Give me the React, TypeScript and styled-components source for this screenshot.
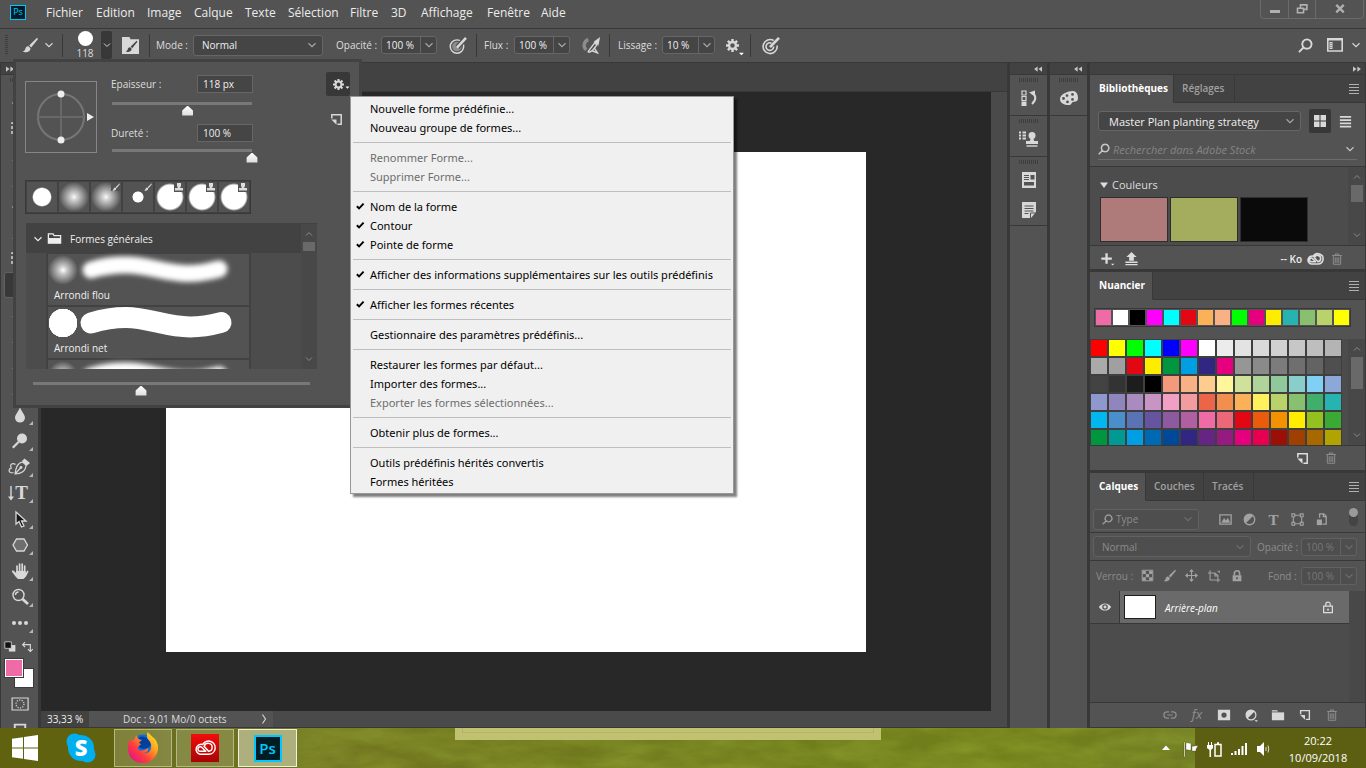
import React from "react";
import styled, { createGlobalStyle, css } from "styled-components";

const c = {
  panel: "#535353",
  strip: "#424242",
  line: "#383838",
  well: "#4c4c4c",
  field: "#454545",
  edge: "#666666",
  text: "#dddddd",
  icon: "#d8d8d8",
  dim: "#8c8c8c",
  canvas: "#282828",
};

const GlobalStyle = createGlobalStyle`
  *, *::before, *::after { box-sizing: border-box; }
  html, body, #root { height: 100%; }
  body {
    margin: 0;
    overflow: hidden;
    font-family: "Open Sans", "Noto Sans", sans-serif;
    font-size: 10px;
    color: ${c.text};
    background: ${c.panel};
  }
  button, input, select { font: inherit; color: inherit; margin: 0; }
  button { border: 0; padding: 0; background: none; }
  svg { display: block; flex: none; overflow: visible; }
`;

/* ---------- Window frame ---------- */

const Window = styled.div`
  height: 100vh;
  display: flex;
  flex-direction: column;
  position: relative;
`;

const MenuBar = styled.header`
  height: 29px;
  flex: none;
  display: flex;
  align-items: center;
  padding: 0 2px 3px 10px;
  background: ${c.panel};
  border-bottom: 1px solid ${c.line};
`;

const AppBadge = styled.span`
  width: 16px;
  height: 15px;
  margin-right: 20px;
  border: 1px solid #00c8ff;
  background: #001d26;
  color: #00c8ff;
  font-size: 9px;
  line-height: 12px;
  text-align: center;
`;

const MenuNav = styled.nav`
  display: flex;
  gap: 14px;
  flex: 1;
`;

const MenuLink = styled.button<{ $w: number }>`
  width: ${(p) => p.$w}px;
  font-size: 12px;
  line-height: 16px;
  color: #ececec;
  text-align: left;
  white-space: nowrap;
`;

const WindowButtons = styled.div`
  display: flex;
  align-self: flex-start;
  height: 19px;
  border: 1px solid #6a6a6a;
  border-top: 0;
  border-radius: 0 0 4px 4px;
`;

const WindowButton = styled.button<{ $w: number }>`
  width: ${(p) => p.$w}px;
  display: flex;
  justify-content: center;
  align-items: center;
  color: #b0b0b0;
  & + & { border-left: 1px solid #6a6a6a; }
`;

/* ---------- Options bar ---------- */

const OptionsBar = styled.div`
  height: 34px;
  flex: none;
  display: flex;
  align-items: center;
  padding: 0 2px 1px 5px;
  background: ${c.panel};
  border-bottom: 1px solid ${c.line};
`;

const Grip = styled.span<{ $vertical?: boolean }>`
  display: block;
  flex: none;
  width: ${(p) => (p.$vertical ? 3 : 20)}px;
  height: ${(p) => (p.$vertical ? 20 : 4)}px;
  background: repeating-linear-gradient(
    ${(p) => (p.$vertical ? "180deg" : "90deg")},
    #3e3e3e 0 1px,
    transparent 1px 2px
  );
`;

const Divider = styled.span<{ $l?: number; $r?: number }>`
  width: 1px;
  height: 23px;
  flex: none;
  background: ${c.line};
  margin: 0 ${(p) => p.$r ?? 7}px 0 ${(p) => p.$l ?? 10}px;
`;

const IconButton = styled.button<{ $w: number; $h?: number; $dark?: boolean }>`
  width: ${(p) => p.$w}px;
  height: ${(p) => p.$h ?? 24}px;
  flex: none;
  display: flex;
  align-items: center;
  justify-content: center;
  border-radius: 2px;
  color: ${c.icon};
  background: ${(p) => (p.$dark ? "#383838" : "none")};
`;

const BrushTip = styled.div`
  width: 32px;
  display: flex;
  flex-direction: column;
  align-items: center;
  font-size: 10px;
  line-height: 12px;
  &::before {
    content: "";
    width: 15px;
    height: 15px;
    margin-bottom: 1px;
    border-radius: 50%;
    background: #fff;
  }
`;

const Label = styled.label<{ $w?: number; $dim?: boolean }>`
  flex: none;
  width: ${(p) => (p.$w ? `${p.$w}px` : "auto")};
  font-size: 10px;
  line-height: 14px;
  white-space: nowrap;
  color: ${(p) => (p.$dim ? c.dim : c.text)};
`;

const SelectBox = styled.div<{ $w?: number; $h?: number; $dim?: boolean }>`
  display: grid;
  align-items: center;
  flex: ${(p) => (p.$w ? "none" : 1)};
  width: ${(p) => (p.$w ? `${p.$w}px` : "auto")};
  height: ${(p) => p.$h ?? 21}px;
  border: 1px solid ${(p) => (p.$dim ? "#616161" : c.edge)};
  border-radius: 3px;
  background: ${(p) => (p.$dim ? "#4e4e4e" : c.field)};
  color: ${(p) => (p.$dim ? c.dim : "#f0f0f0")};
  & > * { grid-area: 1 / 1; }
  & > svg { justify-self: end; margin-right: 3px; pointer-events: none; color: ${(p) => (p.$dim ? "#6c6c6c" : "#a8a8a8")}; }
`;

const Select = styled.select<{ $size?: number; $pad?: number }>`
  appearance: none;
  width: 100%;
  height: 100%;
  border: 0;
  background: none;
  opacity: 1;
  font-size: ${(p) => p.$size ?? 10}px;
  padding: 0 16px 0 ${(p) => p.$pad ?? 8}px;
`;

const ValueField = styled.div<{ $w: number; $dim?: boolean }>`
  flex: none;
  width: ${(p) => p.$w}px;
  height: 18px;
  display: flex;
  align-items: center;
  border: 1px solid ${(p) => (p.$dim ? "#616161" : c.edge)};
  border-radius: 3px;
  background: ${(p) => (p.$dim ? "#4e4e4e" : c.field)};
  color: ${(p) => (p.$dim ? "#777" : "#f0f0f0")};
  input {
    flex: 1;
    min-width: 0;
    height: 100%;
    border: 0;
    padding: 0 0 0 4px;
    background: none;
    font-size: 10px;
  }
  button {
    width: 16px;
    height: 100%;
    display: flex;
    align-items: center;
    justify-content: center;
    border-left: 1px solid ${(p) => (p.$dim ? "#616161" : c.edge)};
    color: ${(p) => (p.$dim ? "#6c6c6c" : "#a8a8a8")};
  }
`;

const Spacer = styled.span<{ $w?: number }>`
  flex: ${(p) => (p.$w ? "none" : 1)};
  width: ${(p) => p.$w ?? 0}px;
`;

/* ---------- Workspace ---------- */

const Workspace = styled.main`
  flex: 1;
  min-height: 0;
  display: flex;
  background: ${c.line};
  border-right: 1px solid ${c.line};
  gap: 3px;
`;

const ToolColumn = styled.aside`
  width: 37px;
  margin-left: 1px;
  flex: none;
  overflow: hidden;
  background: ${c.panel};
  display: flex;
  flex-direction: column;
  align-items: center;
  & > * { flex: none; }
`;

const CollapseBar = styled.div<{ $left?: boolean }>`
  align-self: stretch;
  flex: none;
  height: 12px;
  display: flex;
  align-items: center;
  justify-content: ${(p) => (p.$left ? "flex-start" : "flex-end")};
  padding: 0 5px;
  background: ${c.strip};
  border-bottom: 1px solid ${c.line};
  color: #c8c8c8;
`;

const ToolButton = styled.button<{ $active?: boolean }>`
  position: relative;
  width: 32px;
  height: 26px;
  flex: none;
  display: flex;
  align-items: center;
  justify-content: center;
  border-radius: 3px;
  color: ${c.icon};
  ${(p) => p.$active && css`background: #383838; border: 1px solid #626262;`}
  &::after {
    content: "";
    position: absolute;
    right: 3px;
    bottom: 3px;
    border: 2px solid transparent;
    border-right-color: #b8b8b8;
    border-bottom-color: #b8b8b8;
  }
`;

const ToolList = styled.div`
  padding: 5px 0 3px;
  display: flex;
  flex-direction: column;
`;

const ToolGrip = styled.div`
  padding-top: 3px;
  height: 10px;
`;

const SwatchPair = styled.div`
  display: grid;
  grid-template-columns: 10px 8px 10px;
  grid-template-rows: 10px 8px 10px;
  margin: 4px 2px 8px 0;
`;

const ColorChip = styled.button<{ $front?: boolean; $color: string }>`
  grid-area: ${(p) => (p.$front ? "1 / 1 / 3 / 3" : "2 / 2 / 4 / 4")};
  z-index: ${(p) => (p.$front ? 1 : 0)};
  background: ${(p) => p.$color};
  border: 1px solid #fff;
  outline: 1px solid #3a3a3a;
`;

const DocumentArea = styled.section`
  flex: 1;
  min-width: 0;
  display: flex;
  flex-direction: column;
  background: ${c.strip};
`;

const DocTabs = styled.div`
  height: 29px;
  flex: none;
  border-bottom: 1px solid ${c.line};
`;

const CanvasRow = styled.div`
  flex: 1;
  min-height: 0;
  display: flex;
`;

const CanvasView = styled.div`
  flex: 1;
  display: flex;
  align-items: center;
  justify-content: center;
  background: ${c.canvas};
`;

const Artboard = styled.div`
  width: 700px;
  height: 500px;
  background: #fff;
`;

const CanvasScroll = styled.div`
  width: 16px;
  background: #4a4a4a;
`;

const StatusBar = styled.footer`
  flex: none;
  height: 17px;
  display: flex;
  background: #4a4a4a;
  border-bottom: 1px solid ${c.line};
  line-height: 16px;
`;

const Zoom = styled.input`
  width: 48px;
  border: 0;
  padding: 0 0 0 6px;
  background: #424242;
  color: #f0f0f0;
`;

const DocInfo = styled.div`
  width: 184px;
  display: flex;
  align-items: center;
  justify-content: space-between;
  padding: 0 3px 0 34px;
  background: ${c.panel};
`;

/* ---------- Docks ---------- */

const IconDock = styled.aside`
  flex: none;
  width: 37px;
  display: flex;
  flex-direction: column;
  background: ${c.panel};
`;

const DockGroup = styled.div`
  display: flex;
  flex-direction: column;
  align-items: center;
  padding: 3px 0 1px;
  border-bottom: 1px solid ${c.line};
`;

const PanelColumn = styled.aside`
  flex: none;
  width: 275px;
  display: flex;
  flex-direction: column;
`;

const Panel = styled.section<{ $grow?: boolean }>`
  display: flex;
  flex-direction: column;
  background: ${c.panel};
  min-height: 0;
  flex: ${(p) => (p.$grow ? 1 : "none")};
  margin-bottom: ${(p) => (p.$grow ? 1 : 3)}px;
`;

const TabStrip = styled.div`
  flex: none;
  height: 28px;
  display: flex;
  align-items: stretch;
  background: ${c.strip};
`;

const Tab = styled.button<{ $on?: boolean; $w: number }>`
  width: ${(p) => p.$w}px;
  text-align: left;
  padding: 0 0 1px ${(p) => (p.$on ? 9 : 8)}px;
  font-size: 10px;
  font-weight: ${(p) => (p.$on ? 700 : 600)};
  white-space: nowrap;
  color: ${(p) => (p.$on ? "#fff" : "#a0a0a0")};
  background: ${(p) => (p.$on ? c.panel : c.strip)};
  border-right: 1px solid ${c.line};
  border-bottom: 1px solid ${(p) => (p.$on ? c.panel : c.line)};
`;

const TabFill = styled.div`
  flex: 1;
  display: flex;
  align-items: center;
  justify-content: flex-end;
  padding: 0 3px 2px 0;
  border-bottom: 1px solid ${c.line};
  color: #b0b0b0;
`;

const Row = styled.div<{ $h: number; $pad?: string; $line?: boolean }>`
  flex: none;
  height: ${(p) => p.$h}px;
  display: flex;
  align-items: center;
  padding: ${(p) => p.$pad ?? "0"};
  border-bottom: ${(p) => (p.$line ? `1px solid ${c.line}` : "0")};
`;

const SearchRow = styled.div`
  flex: none;
  height: 21px;
  margin: 0 8px 6px;
  display: flex;
  align-items: center;
  gap: 3px;
  border-bottom: 1px solid #6c6c6c;
  color: #c8c8c8;
  input {
    flex: 1;
    min-width: 0;
    border: 0;
    padding: 0;
    background: none;
    font-size: 11px;
    font-style: italic;
  }
  input::placeholder { color: #848484; opacity: 1; }
`;

const LibraryBody = styled.div`
  flex: none;
  height: 80px;
  display: flex;
  overflow: hidden;
  background: ${c.well};
  border-top: 1px solid ${c.line};
  border-bottom: 1px solid ${c.line};
`;

const LibraryMain = styled.div`
  flex: 1;
  padding: 9px 0 0 10px;
`;

const GroupTitle = styled.h3`
  margin: 0 0 3px;
  display: flex;
  align-items: center;
  gap: 4px;
  font-size: 11px;
  font-weight: 400;
  line-height: 18px;
`;

const BigSwatches = styled.div`
  display: flex;
  gap: 2px;
`;

const BigSwatch = styled.button<{ $color: string }>`
  width: 68px;
  height: 45px;
  border: 1px solid #2e2e2e;
  background: ${(p) => p.$color};
`;

const ScrollTrack = styled.div<{ $w: number; $thumb: number; $top?: number }>`
  flex: none;
  width: ${(p) => p.$w}px;
  display: flex;
  flex-direction: column;
  align-items: center;
  padding: ${(p) => p.$top ?? 8}px 1px 4px;
  background: #484848;
  color: #8a8a8a;
  &::after {
    content: "";
    order: 1;
    width: 12px;
    height: ${(p) => p.$thumb}px;
    background: #696969;
    margin: 2px 0 auto;
  }
  svg:last-of-type { order: 2; }
`;

const RecentColors = styled.div`
  display: grid;
  grid-template-columns: repeat(15, 15px);
  grid-auto-rows: 15px;
  gap: 2px;
  padding: 1px;
  border: 1px solid ${c.line};
`;

const Chip = styled.button<{ $color: string }>`
  background: ${(p) => p.$color};
`;

const SwatchArea = styled.div`
  flex: none;
  height: 107px;
  display: flex;
  justify-content: space-between;
  overflow: hidden;
  background: ${c.well};
  border-bottom: 1px solid ${c.line};
`;

const SwatchGrid = styled.div`
  display: grid;
  grid-template-columns: repeat(14, 16px);
  grid-auto-rows: 16px;
  gap: 2px;
  padding: 1px;
  height: 110px;
  background: #3f3f3f;
`;

const Layers = styled.div`
  flex: 1;
  min-height: 0;
  display: flex;
  background: #484848;
  border-bottom: 1px solid ${c.line};
`;

const LayerStack = styled.div`
  flex: 1;
  background: ${c.well};
  margin-right: 16px;
`;

const LayerRow = styled.div`
  height: 33px;
  display: flex;
  border-bottom: 1px solid ${c.line};
  background: #6a6a6a;
`;

const LayerEye = styled.button`
  width: 30px;
  display: flex;
  align-items: center;
  justify-content: center;
  color: ${c.icon};
  background: ${c.panel};
  border-right: 1px solid ${c.line};
`;

const LayerThumb = styled.span`
  width: 32px;
  height: 24px;
  margin: 4px 9px 4px 4px;
  border: 1px solid #1e1e1e;
  background: #fff;
`;

const LayerName = styled.button`
  flex: 1;
  text-align: left;
  padding-top: 2px;
  font-size: 10px;
  font-style: italic;
  color: #fff;
`;

const Dim = styled.span`
  color: #8f8f8f;
`;

const FooterIcons = styled.div`
  display: flex;
  gap: 13px;
  color: ${c.icon};
`;

const FooterText = styled.span`
  font-weight: 600;
  color: #eee;
`;

const Pill = styled.button`
  width: 9px;
  height: 18px;
  border-radius: 5px;
  background: #444;
  display: flex;
  margin-left: 20px;
  margin-bottom: 4px;
  &::before {
    content: "";
    width: 9px;
    height: 9px;
    border-radius: 50%;
    background: #9a9a9a;
  }
`;

const Muted = styled.div`
  display: flex;
  align-items: center;
  gap: 9px;
  color: #a2a2a2;
`;

const FilterSelect = styled(SelectBox)`
  grid-template-columns: 22px 1fr;
  & > svg:first-child { grid-area: 1 / 1; justify-self: start; margin-left: 8px; color: #9a9a9a; }
  & > select { grid-area: 1 / 1 / 2 / 3; }
  & > svg:last-child { grid-area: 1 / 2; }
`;

/* ---------- Brush picker ---------- */

const BrushPopup = styled.section`
  position: absolute;
  left: 13px;
  top: 59px;
  width: 349px;
  height: 349px;
  border: 3px solid ${c.strip};
  background: ${c.panel};
  padding: 10px 9px 0;
  display: flex;
  flex-direction: column;
`;

const PopupTop = styled.div`
  display: flex;
  height: 108px;
`;

const AngleBox = styled.div`
  width: 72px;
  height: 72px;
  margin: 9px 14px 0 0;
  border: 1px solid #868686;
  flex: none;
`;

const ParamColumn = styled.div`
  width: 142px;
  padding-top: 3px;
`;

const Param = styled.div<{ $gap: number }>`
  margin-bottom: ${(p) => 15 - p.$gap}px;
`;

const ParamHead = styled.div<{ $gap: number }>`
  display: flex;
  justify-content: space-between;
  align-items: center;
  height: 18px;
  margin-bottom: ${(p) => p.$gap}px;
  input {
    width: 56px;
    height: 18px;
    border: 1px solid ${c.edge};
    background: ${c.field};
    padding: 0 5px;
    color: #f0f0f0;
    font-size: 10px;
  }
`;

const Slider = styled.input`
  appearance: none;
  display: block;
  width: calc(100% + 10px);
  height: 16px;
  margin: 0 -5px;
  background: none;
  &::-webkit-slider-runnable-track {
    height: 3px;
    background: linear-gradient(#787878, #787878) center / calc(100% - 12px) 3px no-repeat;
  }
  &::-webkit-slider-thumb {
    appearance: none;
    width: 12px;
    height: 10px;
    margin-top: 4px;
    background: linear-gradient(#fff, #dcdcdc);
    clip-path: polygon(50% 0, 95% 50%, 95% 100%, 5% 100%, 5% 50%);
  }
`;

const PopupSide = styled.div`
  margin-left: auto;
  display: flex;
  flex-direction: column;
  align-items: flex-start;
  gap: 13px;
`;

const RecentBrushes = styled.div`
  display: flex;
  gap: 2px;
  width: 226px;
  padding: 1px;
  border: 1px solid ${c.line};
  background: ${c.strip};
`;

const RecentBrush = styled.button`
  flex: 1;
  height: 30px;
  background: ${c.panel};
`;

const BrushList = styled.div`
  width: 291px;
  height: 146px;
  margin: 9px 0 0 1px;
  display: flex;
  overflow: hidden;
  background: ${c.well};
  border-top: 1px solid ${c.strip};
`;

const BrushListMain = styled.div`
  flex: 1;
`;

const BrushGroup = styled.button`
  width: 100%;
  height: 29px;
  display: flex;
  align-items: center;
  gap: 2px;
  padding-left: 5px;
  background: ${c.strip};
  color: #eee;
  span { margin-left: 6px; }
`;

const BrushCard = styled.button`
  display: flex;
  flex-direction: column;
  align-items: flex-start;
  width: 203px;
  height: 51px;
  margin: 1px 0 2px 21px;
  background: ${c.panel};
  border-left: 1px solid ${c.strip};
  border-right: 1px solid ${c.strip};
  box-shadow: 0 0 0 1px ${c.strip};
  color: #f0f0f0;
  span { padding-left: 6px; line-height: 14px; }
`;

const SizeSlider = styled.div`
  width: 279px;
  margin: 6px 0 0 7px;
`;

/* ---------- Context menu ---------- */

const ContextMenu = styled.div`
  position: absolute;
  left: 350px;
  top: 96px;
  width: 384px;
  padding: 2px;
  background: #f0f0f0;
  border: 1px solid #979797;
  box-shadow: 3px 3px 2px rgba(0, 0, 0, 0.5);
`;

const MenuItem = styled.button`
  width: 100%;
  height: 19px;
  display: grid;
  grid-template-columns: 17px 1fr;
  align-items: center;
  text-align: left;
  font-family: "Noto Sans", "Open Sans", sans-serif;
  font-size: 11px;
  line-height: 18px;
  color: #000;
  white-space: nowrap;
  &:disabled { color: #6d6d6d; }
  span { grid-column: 2; }
  svg { grid-row: 1; margin-left: 3px; }
`;

const Separator = styled.hr`
  height: 1px;
  margin: 5px 0;
  border: 0;
  background: #bebebe;
`;

/* ---------- Taskbar ---------- */

const Taskbar = styled.footer`
  flex: none;
  height: 40px;
  display: flex;
  position: relative;
  overflow: hidden;
  background: linear-gradient(90deg, #60620f 0, #60620f 114px, #6c7022 180px, #70751f 360px, #6f7b1c 55%, #71801a 75%, #6f7a22 1195px);
`;

const Grass = styled.svg`
  position: absolute;
  left: 297px;
  top: 0;
  opacity: 0.35;
`;

const TaskItem = styled.button<{ $w: number; $state?: "open" | "active" }>`
  position: relative;
  flex: none;
  width: ${(p) => p.$w}px;
  height: 38px;
  margin: 1px 4px 0 0;
  display: flex;
  align-items: center;
  justify-content: center;
  ${(p) => p.$state === "open" && css`background: rgba(170, 175, 120, 0.4); border: 1px solid #b5b784;`}
  ${(p) => p.$state === "active" && css`background: rgba(200, 203, 165, 0.7); border: 1px solid #f0f0e0;`}
`;

const PsTile = styled.span`
  width: 28px;
  height: 27px;
  border: 2px solid #00c8ff;
  background: #001d26;
  color: #00c8ff;
  font-size: 15px;
  line-height: 22px;
  font-weight: 600;
`;

const Peek = styled.div`
  position: relative;
  flex: none;
  width: 426px;
  height: 12px;
  margin-left: 154px;
  background: #c0c272;
  padding: 0 7px;
  &::before {
    content: "";
    display: block;
    height: 5px;
    border: 1px solid #b2b468;
    border-top: 0;
  }
`;

const TrayArrow = styled.button`
  position: relative;
  margin-left: auto;
  padding-right: 8px;
  flex: none;
  color: #fff;
`;

const Tray = styled.div`
  position: relative;
  flex: none;
  width: 188px;
  display: flex;
  align-items: center;
  gap: 9px;
  padding: 2px 9px 0 5px;
  color: #fff;
  background: linear-gradient(90deg, transparent 17px, #5c5f12 17px);
`;

const Clock = styled.time`
  flex: 1;
  text-align: center;
  font-size: 11px;
  line-height: 17px;
`;

/* ---------- Icons ---------- */

type IconProps = { name: string; w?: number; h?: number };

const S = { fill: "none", stroke: "currentColor", strokeWidth: 1.4 } as const;
const F = { fill: "currentColor" } as const;

const BRUSH = <><path {...F} d="M15 0.8 L7.2 8.4 L9.2 10.6 L16 2 Z" /><path {...F} d="M6.5 9.2 C4.2 9 3.6 10.6 3.2 12.2 C2.8 13.4 2 14.2 0.6 14.8 C4 16 8.6 15 8.4 11.2 Z" /></>;

const GEAR = (
  <>
    <path {...F} fillRule="evenodd" d="M8 2.300a5.700 5.700 0 1 0 0 11.400a5.700 5.700 0 1 0 0-11.400zM8 5.200a2.800 2.800 0 1 1 0 5.600a2.800 2.800 0 1 1 0-5.600z" />
    <path d="M8 0v3.200M8 12.800V16M0 8h3.200M12.800 8H16M2.300 2.300l2.300 2.300M11.400 11.400l2.300 2.300M2.300 13.700l2.300-2.300M11.400 4.600l2.300-2.300" stroke="currentColor" strokeWidth="3" />
  </>
);

const CLOUD = "M4.800 13.200H11.200a4.900 4.900 0 1 0-4.300-7.300A3.800 3.800 0 1 0 4.800 13.200M9.500 11H5a1.700 1.700 0 1 1 1.300-2.800L9 11M8 7a3 3 0 1 1 3.200 4L7.500 6.800";

const ICONS: Record<string, React.ReactNode> = {
  down: <path {...S} strokeWidth={1.300} d="M4 6 L8 10 L12 6" />,
  up: <path {...S} strokeWidth={1.300} d="M4 10 L8 6 L12 10" />,
  brush: BRUSH,
  brushFolder: <><path {...F} d="M0 0h7l1 2h8v14H0z" /><g transform="translate(3 3) scale(.72)" color="#444">{BRUSH}</g></>,
  gear: GEAR,
  gearCorner: <>{GEAR}<path d="M16 17h6l-3 3z" fill="#fff" /></>,
  gearSide: <>{GEAR}<path d="M18 11h6l-3 3z" fill="#eee" /></>,
  pressure: <><circle cx="7.500" cy="9" r="6.300" {...S} /><circle cx="7.500" cy="9" r="4.500" fill="#8d8d8d" /><path d="M8 9.500 L16 0.800" stroke="#535353" strokeWidth="5" /><path d="M7.500 10 L16 0.800" stroke="currentColor" strokeWidth="2.400" /></>,
  target: <><path {...S} strokeWidth={1.500} d="M11 3.300A6.600 6.600 0 1 0 14.200 8M9 5.800A3.600 3.600 0 1 0 11 9" /><path d="M7.500 9.500L16 0.800" stroke="currentColor" strokeWidth="2.600" /></>,
  airbrush: <><path d="M6 2.500A5.500 5.500 0 0 0 4 12" fill="none" stroke="#8c8c8c" strokeWidth="3.200" /><path {...S} strokeWidth={1.300} d="M5.500 14L12 5.500l2 2-4.500 5.500M5.500 14c2 1 3-1 4-1l5 2-2.500-4" /><path {...F} d="M11 4.500L17 0l-1.500 8z" /></>,
  search: <path {...S} strokeWidth={2} d="M5.600 10.400L1 15M9.500 1.500a5 5 0 1 0 .01 0z" />,
  workspace: <><path {...S} strokeWidth={1.600} d="M.8 2h14.400v12H.8z" /><path {...F} d="M0 1h16v2.500H0zM2.500 5h3v7h-3z" /><path d="M3.500 6.500h1M3.500 8.500h1M3.500 10.500h1" stroke="#535353" /></>,
  hamburger: <path {...S} strokeWidth={1} d="M3 4.500h10M3 7.500h10M3 10.500h10M3 13.500h10" />,
  list: <path {...S} strokeWidth={2} d="M2 3h12M2 6.500h12M2 10h12M2 13.500h12" />,
  grid: <path {...F} d="M2 2h5.500v5.500H2zM8.500 2H14v5.500H8.500zM2 8.500h5.500V14H2zM8.500 8.500H14V14H8.500z" />,
  newPage: <><path {...S} strokeWidth={1.600} d="M3 7V3h10v10H9" /><path {...F} d="M2.500 8H8v5.500z" /></>,
  trash: <path {...S} strokeWidth={1.100} d="M2.500 4h11M6 3.800V2.300h4v1.500M3.800 4.500V14h8.400V4.500M6 6v6.500M8 6v6.500M10 6v6.500" />,
  plus: <><path {...S} strokeWidth={2.600} d="M7.500 1.500v12M1.500 7.500h12" /><path {...F} d="M12.500 13.500h4l-2 2z" /></>,
  upload: <><path {...F} d="M8 1L13.500 6.500h-3v4h-5v-4h-3z" /><path {...S} d="M1.500 12h13M1.500 14.500h13" /></>,
  cloud: <path {...S} strokeWidth={1.500} d={CLOUD} />,
  history: <><path {...S} strokeWidth={1.200} d="M1 1h4v4H1zM1 6.500h4v4H1z" /><path {...F} d="M.5 11.500h5V16h-5zM8 2.500l6-2v5.500z" /><path {...S} strokeWidth={2} d="M10.500 3c5 2 5 7 .5 11" /></>,
  stampList: <><path {...S} strokeWidth={1.800} strokeDasharray="2 1.500 10" d="M-2 1.500h7M-2 4.500h7M-2 7.500h7" /><circle cx="11" cy="4.500" r="3.500" {...F} /><path {...F} d="M9.800 7h2.400l1 3H17v3H5v-3h3.800z" /><path {...S} d="M5.500 15h11" /></>,
  tools: <><path {...F} d="M1 0h14v16H1z" /><path d="M3 3.500h5M3 5.500h5M3 7.500h5" stroke="#535353" /><path d="M9.500 3h4v4.500h-4zM3 10h10v3.500H3z" fill="#535353" /></>,
  note: <><path {...F} d="M1 0h14v10l-5 6H1z" /><path d="M3.500 4h9M3.500 6.500h9M3.500 9h9M3.500 11.500h4M9.500 16v-5H15" stroke="#535353" fill="none" /></>,
  palette: <path {...F} fillRule="evenodd" d="M12 1C7 1-1 4-1 9c0 4 4 6 9 6 3 0 2-2.500 4-3s5 0 5-4-2-7-5-7zM2.500 7a1.400 1.400 0 1 1 0 2.900a1.400 1.400 0 1 1 0-2.900zM6 4.200a1.400 1.400 0 1 1 0 2.800a1.400 1.400 0 1 1 0-2.800zM11.500 3a1.400 1.400 0 1 1 0 2.800a1.400 1.400 0 1 1 0-2.800zM6.500 10.500a1.400 1.400 0 1 1 0 2.800a1.400 1.400 0 1 1 0-2.800zM11.500 8a1.400 1.400 0 1 1 0 2.800a1.400 1.400 0 1 1 0-2.800z" />,
  picture: <><path {...S} d="M2 3h12v10H2z" /><path {...F} d="M3.500 11.500l3-5 2 2.500 2-3 2.500 5.500z" /></>,
  adjust: <><circle cx="8" cy="8" r="5.600" {...S} /><path {...F} d="M12 4L4 12A5.600 5.600 0 0 1 12 4z" /></>,
  type: <text x="8" y="13.500" textAnchor="middle" fontFamily="Liberation Serif" fontWeight="700" fontSize="16" fill="currentColor">T</text>,
  shape: <path {...S} strokeWidth={1.200} d="M3.500 5v6M12.500 5v6M5 3.500h6M5 12.500h6M2 2h3v3H2zM11 2h3v3h-3zM2 11h3v3H2zM11 11h3v3h-3z" />,
  smart: <><path {...S} d="M6 6V2h4.500L13 4.500V13H9" /><path {...S} d="M10 2v3h3" /><path {...F} d="M3 8h5.500v6H3z" /></>,
  checker: <><path {...S} strokeWidth={1.200} d="M1.500 1.500h13v13h-13z" /><path {...F} d="M2 2h4v4H2zM10 2h4v4h-4zM6 6h4v4H6zM2 10h4v4H2zM10 10h4v4h-4z" /></>,
  move: <><path {...S} d="M8 2.500v11M2.500 8h11" /><path {...F} d="M8 0l3 3.500H5zM8 16l3-3.500H5zM0 8l3.500-3v6zM16 8l-3.500-3v6z" /></>,
  crop: <path {...S} strokeWidth={1.200} d="M3.500 1.500V12.500H15M1 4.500h8l3.500 3V15M9 4.500V8h3.500M12 2.500h2v2" />,
  lock: <><path {...F} fillRule="evenodd" d="M3 7h10v7H3zM8 9.300a1.200 1.200 0 1 0 0 2.400a1.200 1.200 0 1 0 0-2.400z" /><path {...S} strokeWidth={1.800} d="M5 7V5a3 3 0 0 1 6 0v2" /></>,
  lockOutline: <><path {...S} d="M3 7h10v7.500H3zM5.500 7V4.800a2.500 2.500 0 0 1 5 0V7" /><path {...F} d="M7 10h2v2H7z" /></>,
  eye: <><path {...F} fillRule="evenodd" d="M1 8c3-5.500 11-5.500 14 0c-3 5.500-11 5.500-14 0zM8 4.800a3.200 3.200 0 1 0 0 6.400a3.200 3.200 0 1 0 0-6.400z" /><circle cx="8" cy="8" r="1.700" {...F} /></>,
  link: <path {...S} d="M7 4.500H4.500a3.500 3.500 0 0 0 0 7H7M9 4.500h2.500a3.500 3.500 0 0 1 0 7H9M5 8h6" />,
  fx: <text x="8" y="13" textAnchor="middle" fontStyle="italic" fontSize="15" fill="currentColor">fx</text>,
  mask: <path {...F} fillRule="evenodd" d="M1 2h14v12H1zM8 5a3 3 0 1 0 0 6a3 3 0 1 0 0-6z" />,
  adjustMenu: <><circle cx="8" cy="8" r="5.600" {...S} /><path {...F} d="M12 4L4 12A5.600 5.600 0 0 1 12 4z" /><path {...F} d="M12 14h4l-2 2z" /></>,
  folder: <><path {...F} d="M1 2.500h6l1 1.500H1z" /><path {...F} d="M1 5h14v9H1z" /></>,
  folderOpen: <><path {...S} d="M1.500 13V3h5l1 2h7v8z" /><path {...F} d="M1.500 7.500h13V13h-13z" /></>,
  blur: <path {...F} d="M8 0C9 4 13 7.500 13 10.800A5 4.800 0 0 1 3 10.800C3 7.500 7 4 8 0z" />,
  dodge: <><circle cx="10" cy="5.500" r="5" {...F} /><path {...S} strokeWidth={2.200} d="M6.500 9L.8 14.800" /></>,
  pen: <><path {...S} strokeWidth={1.200} d="M3 15c6 0 11-3 11-9L10.500 3C5 4 4 9 3 15zM3 15l5.500-6M1.500 13.500C-4 15-4 9-.5 9.500M-.5 9.500C-3 5 1 3.500 3.500 5.500" /><path {...F} d="M10 2L12.500-.5 18 4l-3.500 3z" /><circle cx="9" cy="8.500" r="1.400" {...F} /></>,
  typeTool: <><path {...S} d="M-1 1v12" /><path {...F} d="M-4 11.500h6L-1 15.500z" /><text x="9.500" y="14" textAnchor="middle" fontFamily="Liberation Serif" fontWeight="700" fontSize="19" fill="currentColor">T</text></>,
  arrow: <path d="M4 1v12l3-2.500L9.500 16l2.500-1-2.500-5H14z" fill="#161616" stroke="currentColor" strokeWidth="1.300" />,
  hexagon: <path d="M4.500 2h7.500l3.500 6-3.500 6H4.500L1 8z" fill="#6e6e6e" stroke="currentColor" strokeWidth="1.300" />,
  hand: <><path d="M5 9V3.200M7.600 8V1.200M10.200 8V1.200M12.700 9V3" stroke="currentColor" strokeWidth="1.700" strokeLinecap="round" /><path {...F} d="M4.100 8h9.500l.2 2 1-1.800c.6-.8 1.900-.4 1.600.6L14 13.500 11.500 16H6L3.500 13.500 0 8.800c-.5-1.200.8-1.800 1.700-1L4.100 10z" /></>,
  zoom: <><circle cx="6.500" cy="6" r="5.500" {...S} /><path {...S} d="M3.500 6a3 3 0 0 1 3-3" /><path {...S} strokeWidth={2.800} d="M10.500 10L16 15" /></>,
  dots: <><circle cx="2" cy="8" r="2" {...F} /><circle cx="8" cy="8" r="2" {...F} /><circle cx="14" cy="8" r="2" {...F} /></>,
  marquee: <path {...S} strokeDasharray="3 2" d="M0 2h16v12H0z" />,
  generic: <path {...S} d="M1 14L14 2" />,
  quickMask: <><path {...S} strokeWidth={1.200} d="M.1 2h16v12H.1z" /><circle cx="8" cy="8" r="4" {...S} strokeWidth={1.200} strokeDasharray="1.200 1.300" /></>,
  screen: <path {...S} strokeWidth={2.200} d="M2 14V3h12v11" />,
  defaults: <><path {...F} d="M6 5h8v8H6z" /><path d="M1 1h8v8H1z" fill="#111" stroke="currentColor" /></>,
  swap: <path {...S} d="M2 4.500h9.500V13M5 1.500l-3 3 3 3M8.500 10l3 3 3-3" />,
  doubleRight: <path {...F} d="M0 5l4 3-4 3zM5 5l4 3-4 3z" />,
  doubleRightEnd: <path {...F} d="M8 5l4 3-4 3zM13 5l4 3-4 3z" />,
  doubleLeft: <path {...F} d="M11 5L7 8l4 3zM16 5l-4 3 4 3z" />,
  triangle: <path {...F} d="M0 3h16L8 14z" />,
  check: <path d="M1.500 7.500L5.500 11.500L13.500 3" fill="none" stroke="#000" strokeWidth="3.400" />,
  min: <path {...F} d="M3 9h10v3H3z" />,
  restore: <path {...S} strokeWidth={2.200} d="M6 7V2.500h8.500v6H10M2 7h8v6H2z" />,
  close: <path {...S} strokeWidth={3} d="M3 2.500l10 10M13 2.500l-10 10" />,
  chevRight: <path {...S} d="M6 2l4 6-4 6" />,
};

const Icon = ({ name, w = 16, h }: IconProps) => (
  <svg width={w} height={h ?? w} viewBox="0 0 16 16" aria-hidden="true">{ICONS[name]}</svg>
);

const StrokeSample = ({ soft, id }: { soft?: boolean; id: string }) => (
  <svg width="200" height="34" viewBox="0 0 200 34">
    <defs>
      <radialGradient id={`tip-${id}`}>
        <stop offset="0" stopColor="#fff" />
        <stop offset={soft ? 0.3 : 0.98} stopColor="#fff" stopOpacity={soft ? 0.65 : 1} />
        <stop offset="1" stopColor="#fff" stopOpacity="0" />
      </radialGradient>
      <filter id={`soft-${id}`} x="-20%" y="-200%" width="140%" height="500%"><feGaussianBlur stdDeviation="2.500" /></filter>
    </defs>
    <circle cx="15" cy="16" r={soft ? 15 : 14.500} fill={`url(#tip-${id})`} />
    <path
      d={soft ? "M43 16 C56 12 66 11 78 11 C100 11 118 19.500 140 19.500 C152 19.500 160 18 171 15" : "M43 16 C56 12 66 10.500 78 10.500 C100 10.500 118 20 142 20 C154 20 164 18 173 15.500"}
      fill="none"
      stroke="#fff"
      strokeLinecap="round"
      strokeWidth={soft ? 17 : 21}
      filter={soft ? `url(#soft-${id})` : undefined}
    />
  </svg>
);

const recentTips = [
  { r: 10 }, { r: 15, soft: true }, { r: 15, soft: true, mark: "brush" }, { r: 6, mark: "brush" },
  { r: 14, mark: "stamp" }, { r: 14, mark: "stamp" }, { r: 14, mark: "stamp" },
];

const RecentTip = ({ r, soft, mark, id }: { r: number; soft?: boolean; mark?: string; id: number }) => (
  <svg width="100%" height="30" viewBox="0 0 30 30">
    <defs>
      <radialGradient id={`rt${id}`}>
        <stop offset="0" stopColor="#fff" />
        <stop offset={soft ? 0.1 : 0.85} stopColor="#fff" stopOpacity={soft ? 0.85 : 1} />
        <stop offset="1" stopColor="#fff" stopOpacity="0" />
      </radialGradient>
    </defs>
    <circle cx="15" cy="15" r={r} fill={`url(#rt${id})`} />
    {mark === "brush" && <g color="#ddd"><path d="M20 1h10v8H20z" fill="#535353" /><g transform="translate(21 1) scale(.5)">{BRUSH}</g></g>}
    {mark === "stamp" && <><path d="M19 1h10v9H19z" fill="#535353" /><path d="M22 1h4v3l-1 2h3v2.500h-8V6h3l-1-2z" fill="#ddd" /></>}
  </svg>
);

/* ---------- Data ---------- */

const menus: [string, number][] = [
  ["Fichier", 36], ["Edition", 37], ["Image", 33], ["Calque", 37], ["Texte", 29], ["Sélection", 48],
  ["Filtre", 27], ["3D", 16], ["Affichage", 52], ["Fenêtre", 40], ["Aide", 30],
];

const tools = [
  "move", "marquee", "generic", "generic", "move", "generic", "marquee", "brush", "generic", "generic",
  "generic", "generic", "blur", "dodge", "pen", "typeTool", "arrow", "hexagon", "hand", "zoom", "dots",
];

const recentColors = "#ee6ba5 #fff #000 #f0f #0ff #e30613 #fab157 #f7b184 #0f0 #e6007e #ffed00 #27b4b1 #88c070 #b9d36a #ff0".split(" ");

const swatches = `#f00 #ff0 #0f0 #0ff #00f #f0f #fff #ececec #e3e3e3 #dadada #d1d1d1 #c7c7c7 #bebebe #b4b4b4
#aaa #a0a0a0 #e30613 #ffed00 #009640 #009fe3 #312783 #e6007e #969696 #8a8a8a #7c7c7c #6f6f6f #636363 #4f4f4f
#434343 #333 #1d1d1d #000 #f39a7c #f7b184 #fccd8e #fff59b #d0e19b #afd499 #8fc89b #89ceca #80cff4 #8ba8d8
#8e98cd #9185be #a98bc0 #c993c3 #f29fc5 #f39ca0 #ec6548 #f38f4e #fab157 #fff05d #b9d36a #88c070 #40af6c #27b4b1
#00b8ee #4a8ecb #5a73b5 #6555a0 #8e5a9f #b05fa0 #ee6ba5 #ec6879 #e30613 #ea5b0c #f39200 #ffed00 #95c11f #3aaa35
#009640 #009a93 #009fe3 #0069b4 #004899 #312783 #662483 #951b81 #e6007e #e6004f #9c0f06 #a04000 #a86800 #b2a400`.split(/\s+/);

type Entry = { t: string; off?: boolean; on?: boolean };
const contextGroups: Entry[][] = [
  [{ t: "Nouvelle forme prédéfinie..." }, { t: "Nouveau groupe de formes..." }],
  [{ t: "Renommer Forme...", off: true }, { t: "Supprimer Forme...", off: true }],
  [{ t: "Nom de la forme", on: true }, { t: "Contour", on: true }, { t: "Pointe de forme", on: true }],
  [{ t: "Afficher des informations supplémentaires sur les outils prédéfinis", on: true }],
  [{ t: "Afficher les formes récentes", on: true }],
  [{ t: "Gestionnaire des paramètres prédéfinis..." }],
  [{ t: "Restaurer les formes par défaut..." }, { t: "Importer des formes..." }, { t: "Exporter les formes sélectionnées...", off: true }],
  [{ t: "Obtenir plus de formes..." }],
  [{ t: "Outils prédéfinis hérités convertis" }, { t: "Formes héritées" }],
];

/* ---------- Parts ---------- */

const Percent = ({ id, value, w, dim }: { id: string; value: string; w: number; dim?: boolean }) => (
  <ValueField $w={w} $dim={dim}>
    <input id={id} defaultValue={value} disabled={dim} />
    <button aria-label="Ouvrir le curseur"><Icon name="down" w={14} /></button>
  </ValueField>
);

const Options = () => (
  <OptionsBar>
    <Grip $vertical />
    <Spacer $w={14} />
    <IconButton $w={16} aria-label="Pinceau"><Icon name="brush" /></IconButton>
    <IconButton $w={22} aria-label="Outils prédéfinis"><Icon name="down" w={14} /></IconButton>
    <Divider $l={2} $r={6} />
    <BrushTip>118</BrushTip>
    <IconButton $w={11} $h={28} $dark aria-label="Formes"><Icon name="down" w={12} /></IconButton>
    <Spacer $w={9} />
    <IconButton $w={18} aria-label="Panneau Formes"><Icon name="brushFolder" w={17} /></IconButton>
    <Divider $l={10} $r={6} />
    <Label $w={37} htmlFor="mode">Mode :</Label>
    <SelectBox $w={130}>
      <Select id="mode"><option>Normal</option></Select>
      <Icon name="down" w={14} />
    </SelectBox>
    <Spacer $w={13} />
    <Label $w={45} htmlFor="opacity">Opacité :</Label>
    <Percent id="opacity" value="100 %" w={56} />
    <Spacer $w={10} />
    <IconButton $w={20} aria-label="Pression opacité"><Icon name="pressure" w={17} /></IconButton>
    <Divider $l={9} $r={7} />
    <Label $w={30} htmlFor="flow">Flux :</Label>
    <Percent id="flow" value="100 %" w={56} />
    <Spacer $w={10} />
    <IconButton $w={20} aria-label="Aérographe"><Icon name="airbrush" w={17} /></IconButton>
    <Divider $l={9} $r={8} />
    <Label $w={44} htmlFor="smooth">Lissage :</Label>
    <Percent id="smooth" value="10 %" w={53} />
    <Spacer $w={7} />
    <IconButton $w={20} aria-label="Options de lissage"><Icon name="gearCorner" w={13} /></IconButton>
    <Divider $l={8} $r={9} />
    <IconButton $w={20} aria-label="Pression taille"><Icon name="target" w={17} /></IconButton>
    <Spacer />
    <IconButton $w={20} aria-label="Rechercher"><Icon name="search" w={15} /></IconButton>
    <Spacer $w={12} />
    <IconButton $w={16} aria-label="Espace de travail"><Icon name="workspace" /></IconButton>
    <Spacer $w={5} />
    <IconButton $w={16} aria-label="Choisir l'espace"><Icon name="down" w={14} /></IconButton>
  </OptionsBar>
);

const Toolbox = () => (
  <ToolColumn>
    <CollapseBar $left><Icon name="doubleRight" w={14} /></CollapseBar>
    <ToolGrip><Grip /></ToolGrip>
    <ToolList>
      {tools.map((t, i) => (
        <ToolButton key={i} $active={i === 7} aria-label={`Outil ${i + 1}`}>
          <Icon name={t} />
        </ToolButton>
      ))}
    </ToolList>
    <Row $h={16}>
      <IconButton $w={16} $h={14} aria-label="Couleurs par défaut"><Icon name="defaults" w={13} /></IconButton>
      <IconButton $w={18} $h={14} aria-label="Permuter"><Icon name="swap" w={13} /></IconButton>
    </Row>
    <SwatchPair>
      <ColorChip $front $color="#ee6ba5" aria-label="Premier plan" />
      <ColorChip $color="#fff" aria-label="Arrière-plan" />
    </SwatchPair>
    <IconButton $w={20} $h={18} aria-label="Mode masque"><Icon name="quickMask" /></IconButton>
    <IconButton $w={20} $h={32} aria-label="Mode écran"><Icon name="screen" w={14} /></IconButton>
  </ToolColumn>
);

const Library = () => (
  <Panel>
    <TabStrip>
      <Tab $on $w={84}>Bibliothèques</Tab>
      <Tab $w={61}>Réglages</Tab>
      <TabFill><Icon name="hamburger" /></TabFill>
    </TabStrip>
    <Row $h={36} $pad="0 10px 0 8px">
      <SelectBox $h={20}>
        <Select $size={11} $pad={10} aria-label="Bibliothèque"><option>Master Plan planting strategy</option></Select>
        <Icon name="down" w={14} />
      </SelectBox>
      <Spacer $w={8} />
      <IconButton $w={22} $dark aria-label="Grille"><Icon name="grid" /></IconButton>
      <Spacer $w={4} />
      <IconButton $w={20} aria-label="Liste"><Icon name="list" w={15} /></IconButton>
    </Row>
    <SearchRow>
      <Icon name="search" w={12} />
      <input aria-label="Rechercher" placeholder="Rechercher dans Adobe Stock" />
      <Icon name="down" w={14} />
    </SearchRow>
    <LibraryBody>
      <LibraryMain>
        <GroupTitle><Icon name="triangle" w={8} />Couleurs</GroupTitle>
        <BigSwatches>
          {["#af7b7a", "#a4ac5d", "#0a0a0a"].map((k) => <BigSwatch key={k} $color={k} aria-label={k} />)}
        </BigSwatches>
      </LibraryMain>
      <ScrollTrack $w={17} $thumb={17} $top={4}><Icon name="up" w={14} h={12} /><Icon name="down" w={14} h={12} /></ScrollTrack>
    </LibraryBody>
    <Row $h={23} $pad="2px 21px 0 10px">
      <Icon name="plus" w={14} />
      <Spacer $w={10} />
      <Icon name="upload" w={15} />
      <Spacer />
      <FooterText>-- Ko</FooterText>
      <Spacer $w={4} />
      <Icon name="cloud" w={17} />
      <Spacer $w={7} />
      <Dim><Icon name="trash" w={14} /></Dim>
    </Row>
  </Panel>
);

const Swatches = () => (
  <Panel>
    <TabStrip>
      <Tab $on $w={63}>Nuancier</Tab>
      <TabFill><Icon name="hamburger" /></TabFill>
    </TabStrip>
    <Row $h={39} $pad="0 0 4px 4px">
      <RecentColors>
        {recentColors.map((k, i) => <Chip key={i} $color={k} aria-label={k} />)}
      </RecentColors>
    </Row>
    <SwatchArea>
      <SwatchGrid>
        {swatches.map((k, i) => <Chip key={i} $color={k} aria-label={k} />)}
      </SwatchGrid>
      <ScrollTrack $w={17} $thumb={32} $top={4}><Icon name="up" w={14} h={12} /><Icon name="down" w={14} h={12} /></ScrollTrack>
    </SwatchArea>
    <Row $h={24} $pad="0 27px 0 0">
      <Spacer />
      <Icon name="newPage" w={15} />
      <Spacer $w={14} />
      <Dim><Icon name="trash" w={14} /></Dim>
    </Row>
  </Panel>
);

const LayersPanel = () => (
  <Panel $grow>
    <TabStrip>
      <Tab $on $w={56}>Calques</Tab>
      <Tab $w={58}>Couches</Tab>
      <Tab $w={50}>Tracés</Tab>
      <TabFill><Icon name="hamburger" /></TabFill>
    </TabStrip>
    <Row $h={32} $pad="5px 8px 0 3px" $line>
      <FilterSelect $w={106} $dim>
        <Icon name="search" w={11} />
        <Select $pad={22} disabled aria-label="Filtre"><option>Type</option></Select>
        <Icon name="down" w={14} />
      </FilterSelect>
      <Spacer $w={19} />
      <Muted>
        <Icon name="picture" w={15} /><Icon name="adjust" w={15} /><Icon name="type" w={15} /><Icon name="shape" w={15} /><Icon name="smart" w={15} />
      </Muted>
      <Pill aria-label="Activer le filtre" />
    </Row>
    <Row $h={28} $pad="0 8px 0 3px" $line>
      <SelectBox $w={158} $dim>
        <Select disabled aria-label="Mode de fusion"><option>Normal</option></Select>
        <Icon name="down" w={14} />
      </SelectBox>
      <Spacer />
      <Label $dim $w={44} htmlFor="lop">Opacité :</Label>
      <Percent id="lop" value="100 %" w={56} dim />
    </Row>
    <Row $h={30} $pad="0 8px 1px 6px">
      <Label as="span" $dim $w={45}>Verrou :</Label>
      <Muted>
        <Icon name="checker" w={13} /><Icon name="brush" w={13} /><Icon name="move" w={13} /><Icon name="crop" w={14} /><Icon name="lock" w={14} />
      </Muted>
      <Spacer />
      <Label $dim $w={33} htmlFor="lfill">Fond :</Label>
      <Percent id="lfill" value="100 %" w={56} dim />
    </Row>
    <Layers>
      <LayerStack>
        <LayerRow>
          <LayerEye aria-label="Visibilité"><Icon name="eye" w={14} /></LayerEye>
          <LayerThumb />
          <LayerName>Arrière-plan</LayerName>
          <Row $h={32} $pad="0 14px 0 0"><Icon name="lockOutline" w={14} /></Row>
        </LayerRow>
      </LayerStack>
    </Layers>
    <Row $h={24} $pad="0 26px 0 0">
      <Spacer />
      <FooterIcons>
        <Dim><Icon name="link" w={14} /></Dim>
        <Dim><Icon name="fx" w={14} /></Dim>
        <Icon name="mask" w={14} />
        <Icon name="adjustMenu" w={14} />
        <Icon name="folder" w={14} />
        <Icon name="newPage" w={14} />
        <Dim><Icon name="trash" w={14} /></Dim>
      </FooterIcons>
    </Row>
  </Panel>
);

const BrushPicker = () => (
  <BrushPopup aria-label="Sélecteur de formes">
    <PopupTop>
      <AngleBox>
        <svg width="70" height="70" viewBox="0 0 70 70">
          <circle cx="35" cy="35" r="23" fill="none" stroke="#767676" strokeWidth="2" />
          <path d="M35 12v46M12 35h46" stroke="#686868" strokeWidth="2" />
          <circle cx="35" cy="12" r="3.500" fill="#eee" />
          <circle cx="35" cy="58" r="3.500" fill="#eee" />
          <path d="M61 31l7 4-7 4z" fill="#eee" />
        </svg>
      </AngleBox>
      <ParamColumn>
        <Param $gap={2}>
          <ParamHead $gap={2}><Label htmlFor="size">Epaisseur :</Label><input id="size" defaultValue="118 px" /></ParamHead>
          <Slider type="range" aria-label="Epaisseur" defaultValue={54} />
        </Param>
        <Param $gap={0}>
          <ParamHead $gap={0}><Label htmlFor="hard">Dureté :</Label><input id="hard" defaultValue="100 %" /></ParamHead>
          <Slider type="range" aria-label="Dureté" defaultValue={100} />
        </Param>
      </ParamColumn>
      <PopupSide>
        <IconButton $w={24} $dark aria-label="Options"><Icon name="gearSide" w={11} /></IconButton>
        <IconButton $w={20} $h={20} aria-label="Nouvelle forme"><Icon name="newPage" w={15} /></IconButton>
      </PopupSide>
    </PopupTop>
    <RecentBrushes>
      {recentTips.map((t, i) => <RecentBrush key={i} aria-label={`Forme récente ${i + 1}`}><RecentTip {...t} id={i} /></RecentBrush>)}
    </RecentBrushes>
    <BrushList>
      <BrushListMain>
        <BrushGroup><Icon name="down" w={14} /><Icon name="folderOpen" w={15} /><span>Formes générales</span></BrushGroup>
        <BrushCard><StrokeSample soft id="a" /><span>Arrondi flou</span></BrushCard>
        <BrushCard><StrokeSample id="b" /><span>Arrondi net</span></BrushCard>
        <BrushCard><StrokeSample soft id="c" /></BrushCard>
      </BrushListMain>
      <ScrollTrack $w={16} $thumb={9} $top={4}><Icon name="up" w={14} h={12} /><Icon name="down" w={14} h={12} /></ScrollTrack>
    </BrushList>
    <SizeSlider><Slider type="range" aria-label="Taille des vignettes" defaultValue={39} /></SizeSlider>
  </BrushPopup>
);

const SystemBar = () => (
  <Taskbar>
    <Grass width="900" height="40">
      <filter id="grass" x="0" y="0" width="100%" height="100%">
        <feTurbulence type="fractalNoise" baseFrequency="0.02 0.06" numOctaves="5" seed="8" />
        <feColorMatrix values="0 0 0 0 0.44  0 0 0 0 0.58  0 0 0 0 0.06  1 1 0 0 -0.600" />
      </filter>
      <rect width="900" height="40" filter="url(#grass)" />
    </Grass>
    <TaskItem $w={50} aria-label="Démarrer">
      <svg width="26" height="26" viewBox="0 0 26 26" fill="#fff"><path d="M0 3.800L11 2.200V12.400H0zM12 2L26 0V12.400H12zM0 13.400H11V23.800L0 22.200zM12 13.400H26V26L12 24z" /></svg>
    </TaskItem>
    <TaskItem $w={54} aria-label="Skype">
      <svg width="30" height="30" viewBox="0 0 30 30">
        <g fill="#00aff0"><circle cx="15" cy="15" r="13" /><circle cx="8.500" cy="8.500" r="8" /><circle cx="21.500" cy="21.500" r="8" /></g>
        <text x="15" y="23" textAnchor="middle" fontWeight="800" fontSize="22" fill="#fff">S</text>
      </svg>
    </TaskItem>
    <Spacer $w={2} />
    <TaskItem $w={58} $state="open" aria-label="Firefox">
      <svg width="32" height="32" viewBox="0 0 32 32">
        <defs>
          <linearGradient id="fox" x1="1" y1="0" x2="0.100" y2="0.900">
            <stop offset="0.100" stopColor="#ffe226" /><stop offset="0.400" stopColor="#ff9a1f" /><stop offset="0.700" stopColor="#ff3b3f" /><stop offset="1" stopColor="#e31587" />
          </linearGradient>
        </defs>
        <circle cx="16" cy="14" r="11.500" fill="#0a6fe0" />
        <path d="M12 5c6-2 11 2 12 8c-3 4-8 5-12 2z" fill="#003f9e" />
        <path d="M3 6c0 2 .5 3 1 3.500L7 7c1-2 2-3 3-3.500L11 7l4 1c-1 1-3 2-3 3l2 1c-1 2-4 2-3 5c3 3 7 1 10-1c1 3-2 5-5 5c6 1 9-3 8-9c-1-4-4-4-4-8c0-2 0-3 1-4c1 3 9 6 10 14c1 9-6 17-15 17S1 25 1 17C1 12 2 9 3 6z" fill="url(#fox)" />
      </svg>
    </TaskItem>
    <TaskItem $w={58} $state="open" aria-label="Creative Cloud">
      <svg width="28" height="28" viewBox="0 0 28 28">
        <defs><linearGradient id="cc" x2="0" y2="1"><stop stopColor="#f40c0c" /><stop offset="1" stopColor="#a80406" /></linearGradient></defs>
        <rect width="28" height="28" fill="url(#cc)" />
        <g transform="translate(2.500 2.500) scale(1.350)"><path d={CLOUD} fill="none" stroke="#fff" strokeWidth="1.100" /></g>
      </svg>
    </TaskItem>
    <TaskItem $w={59} $state="active" aria-label="Photoshop"><PsTile>Ps</PsTile></TaskItem>
    <Peek />
    <TrayArrow aria-label="Icônes masquées"><svg width="8" height="6" viewBox="0 0 8 6"><path d="M0 5L4 0.500L8 5z" fill="#fff" /></svg></TrayArrow>
    <Tray>
      <svg width="15" height="15" viewBox="0 0 15 15"><path d="M1 0h1v15H1zM3 1c2-1 3 1 5 0v7c-2 1-3-1-5 0zM9 4c2 1 3-1 6 0l-2 3v2H9z" fill="#fff" stroke="#33350a" strokeWidth=".3" /></svg>
      <svg width="15" height="15" viewBox="0 0 15 15"><path d="M0 3h6v3L4 8v7H2.500V8L0 6zM1 0h1v3H1zM4 0h1v3H4z" fill="#fff" /><path d="M8 2.500v11.500h6V2.500zM10 1h2" fill="none" stroke="#fff" strokeWidth="1.500" /></svg>
      <svg width="17" height="13" viewBox="0 0 17 13"><path d="M0 10h2v2H0zM3.500 8h2v4h-2zM7 6h2v6H7zM10.500 3h2v9h-2zM14 0h2v12h-2z" fill="#fff" /></svg>
      <svg width="13" height="14" viewBox="0 0 13 14"><path d="M0 4h3l4-4v14l-4-4H0z" fill="#fff" /><path d="M9 5v4M11 3.500q1.500 3.500 0 7" fill="none" stroke="#ddd" /></svg>
      <Clock>20:22<br />10/09/2018</Clock>
    </Tray>
  </Taskbar>
);

export default function App() {
  return (
    <Window>
      <GlobalStyle />
      <MenuBar>
        <AppBadge>Ps</AppBadge>
        <MenuNav>{menus.map(([m, w]) => <MenuLink key={m} $w={w}>{m}</MenuLink>)}</MenuNav>
        <WindowButtons>
          <WindowButton $w={27} aria-label="Réduire"><Icon name="min" /></WindowButton>
          <WindowButton $w={27} aria-label="Restaurer"><Icon name="restore" w={12} /></WindowButton>
          <WindowButton $w={48} aria-label="Fermer"><Icon name="close" w={12} /></WindowButton>
        </WindowButtons>
      </MenuBar>
      <Options />
      <Workspace>
        <Toolbox />
        <DocumentArea>
          <DocTabs />
          <CanvasRow>
            <CanvasView><Artboard /></CanvasView>
            <CanvasScroll />
          </CanvasRow>
          <StatusBar>
            <Zoom defaultValue="33,33 %" aria-label="Zoom" />
            <DocInfo><span>Doc : 9,01 Mo/0 octets</span><Icon name="chevRight" w={12} /></DocInfo>
          </StatusBar>
        </DocumentArea>
        <IconDock>
          <CollapseBar><Icon name="doubleLeft" w={14} /></CollapseBar>
          <DockGroup><Grip /><IconButton $w={32} $h={32} aria-label="Historique"><Icon name="history" /></IconButton></DockGroup>
          <DockGroup><Grip /><IconButton $w={32} $h={32} aria-label="Source de duplication"><Icon name="stampList" /></IconButton></DockGroup>
          <DockGroup>
            <Grip />
            <IconButton $w={32} $h={32} aria-label="Outils"><Icon name="tools" /></IconButton>
            <IconButton $w={32} $h={28} aria-label="Annotations"><Icon name="note" /></IconButton>
          </DockGroup>
        </IconDock>
        <IconDock>
          <CollapseBar><Icon name="doubleLeft" w={14} /></CollapseBar>
          <DockGroup><Grip /><IconButton $w={32} $h={32} aria-label="Couleur"><Icon name="palette" /></IconButton></DockGroup>
        </IconDock>
        <PanelColumn>
          <CollapseBar><Icon name="doubleRightEnd" w={14} /></CollapseBar>
          <Library />
          <Swatches />
          <LayersPanel />
        </PanelColumn>
      </Workspace>
      <SystemBar />
      <BrushPicker />
      <ContextMenu role="menu">
        {contextGroups.map((g, i) => (
          <React.Fragment key={i}>
            {i > 0 && <Separator />}
            {g.map((e) => (
              <MenuItem key={e.t} role="menuitem" disabled={e.off}>
                {e.on && <Icon name="check" w={9} />}
                <span>{e.t}</span>
              </MenuItem>
            ))}
          </React.Fragment>
        ))}
      </ContextMenu>
    </Window>
  );
}
